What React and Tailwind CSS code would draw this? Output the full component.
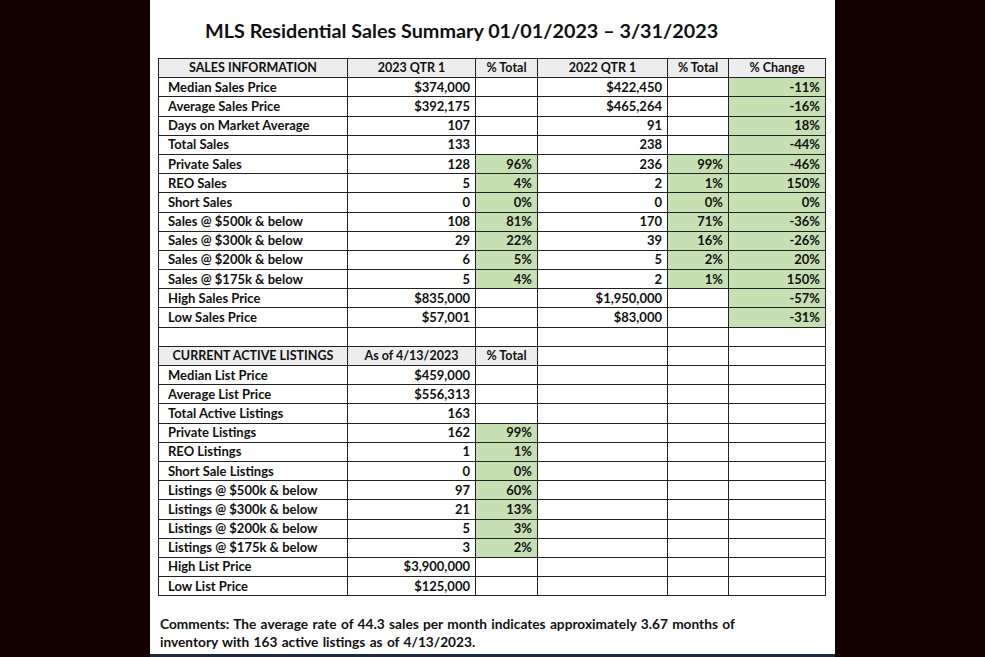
const sales = [
  ["Median Sales Price", "$374,000", "", "$422,450", "", "-11%"],
  ["Average Sales Price", "$392,175", "", "$465,264", "", "-16%"],
  ["Days on Market Average", "107", "", "91", "", "18%"],
  ["Total Sales", "133", "", "238", "", "-44%"],
  ["Private Sales", "128", "96%", "236", "99%", "-46%"],
  ["REO Sales", "5", "4%", "2", "1%", "150%"],
  ["Short Sales", "0", "0%", "0", "0%", "0%"],
  ["Sales @ $500k & below", "108", "81%", "170", "71%", "-36%"],
  ["Sales @ $300k & below", "29", "22%", "39", "16%", "-26%"],
  ["Sales @ $200k & below", "6", "5%", "5", "2%", "20%"],
  ["Sales @ $175k & below", "5", "4%", "2", "1%", "150%"],
  ["High Sales Price", "$835,000", "", "$1,950,000", "", "-57%"],
  ["Low Sales Price", "$57,001", "", "$83,000", "", "-31%"],
];

const listings = [
  ["Median List Price", "$459,000", ""],
  ["Average List Price", "$556,313", ""],
  ["Total Active Listings", "163", ""],
  ["Private Listings", "162", "99%"],
  ["REO Listings", "1", "1%"],
  ["Short Sale Listings", "0", "0%"],
  ["Listings @ $500k & below", "97", "60%"],
  ["Listings @ $300k & below", "21", "13%"],
  ["Listings @ $200k & below", "5", "3%"],
  ["Listings @ $175k & below", "3", "2%"],
  ["High List Price", "$3,900,000", ""],
  ["Low List Price", "$125,000", ""],
];

const td = "border border-[#222] h-[19.2px] p-0 leading-none";
const num = td + " text-right pr-[5px]";
const green = "bg-[#c6e0b4]";
const head = td + " bg-[#ededed] text-center text-[12.5px]";

export default function App() {
  return (
    <div className="h-screen bg-[#150000] flex justify-center font-['Lato',sans-serif] font-bold text-[#111]">
      <div className="w-[685px] bg-white flex flex-col">
        <div className="h-[654px] px-[8px]">
          <h1 className="pl-[47px] pt-[18px] h-[58px] text-[19.8px] leading-[24px]">
            MLS Residential Sales Summary 01/01/2023 – 3/31/2023
          </h1>
          <table className="table-fixed border-collapse w-[667px] text-[13px]">
            <colgroup>
              <col className="w-[189px]" />
              <col className="w-[128px]" />
              <col className="w-[62px]" />
              <col className="w-[130px]" />
              <col className="w-[61px]" />
              <col className="w-[97px]" />
            </colgroup>
            <tbody>
              <tr>
                <td className={head}>SALES INFORMATION</td>
                <td className={head}>2023 QTR 1</td>
                <td className={head}>% Total</td>
                <td className={head}>2022 QTR 1</td>
                <td className={head}>% Total</td>
                <td className={head}>% Change</td>
              </tr>
              {sales.map((r) => (
                <tr key={r[0]}>
                  <td className={td + " pl-[9px]"}>{r[0]}</td>
                  <td className={num}>{r[1]}</td>
                  <td className={num + (r[2] ? " " + green : "")}>{r[2]}</td>
                  <td className={num}>{r[3]}</td>
                  <td className={num + (r[4] ? " " + green : "")}>{r[4]}</td>
                  <td className={num + " " + green}>{r[5]}</td>
                </tr>
              ))}
              <tr>
                <td className={td}></td>
                <td className={td}></td>
                <td className={td}></td>
                <td className={td}></td>
                <td className={td}></td>
                <td className={td}></td>
              </tr>
              <tr>
                <td className={head}>CURRENT ACTIVE LISTINGS</td>
                <td className={head}>As of 4/13/2023</td>
                <td className={head}>% Total</td>
                <td className={td}></td>
                <td className={td}></td>
                <td className={td}></td>
              </tr>
              {listings.map((r) => (
                <tr key={r[0]}>
                  <td className={td + " pl-[9px]"}>{r[0]}</td>
                  <td className={num}>{r[1]}</td>
                  <td className={num + (r[2] ? " " + green : "")}>{r[2]}</td>
                  <td className={td}></td>
                  <td className={td}></td>
                  <td className={td}></td>
                </tr>
              ))}
            </tbody>
          </table>
          <p className="mt-[19px] pl-[2px] text-[13.7px] leading-[18px] [word-spacing:1px] w-[590px]">
            Comments: The average rate of 44.3 sales per month indicates approximately 3.67 months of inventory with 163 active listings as of 4/13/2023.
          </p>
        </div>
        <div className="h-[3px] bg-[#1d2a42]"></div>
      </div>
    </div>
  );
}
